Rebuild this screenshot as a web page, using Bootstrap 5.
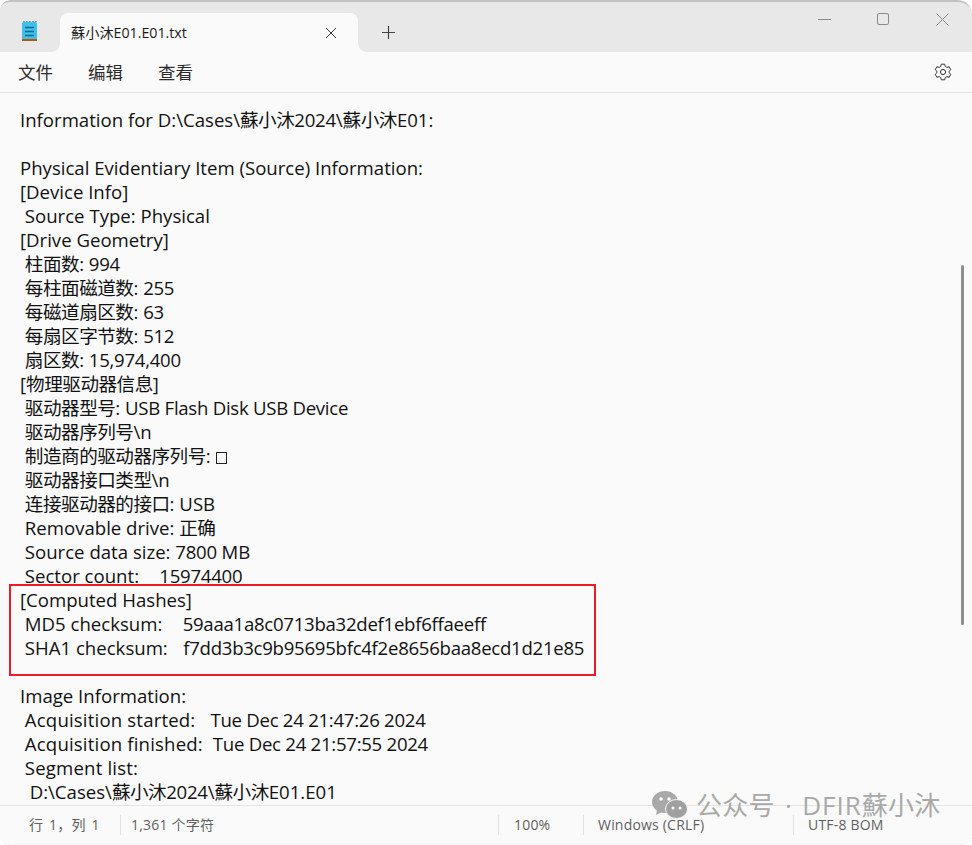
<!doctype html>
<html lang="zh-CN"><head><meta charset="utf-8"><title>Notepad</title>
<link href="https://cdn.jsdelivr.net/npm/bootstrap@5.3.0/dist/css/bootstrap.min.css" rel="stylesheet">
<style>
html,body{height:845px;overflow:hidden;background:#fff}
body{font-family:"Open Sans","Noto Sans CJK SC",sans-serif;color:#1b1b1b}
.win{height:845px;width:972px;background:#fafafa;border-radius:10px 14px 10px 10px;overflow:hidden;position:relative;box-shadow:inset 0 -1px 1px -1px #bbb}
.tabbar{height:52px;background:#e8e8e8;border-top:2px solid #c2c2c2;border-radius:10px 14px 0 0}
.appicon{width:60px;margin-top:10px}
.ftab{width:298px;height:39px;margin-top:11px;background:#fafafa;border-radius:8px 8px 0 0;padding:0 21px 0 11px;font-size:14.2px;position:relative}
.ftab::before,.ftab::after{content:"";position:absolute;bottom:0;width:8px;height:8px}
.ftab::before{left:-8px;background:radial-gradient(circle at 0 0,#e8e8e8 7.5px,#fafafa 8px)}
.ftab::after{right:-8px;background:radial-gradient(circle at 100% 0,#e8e8e8 7.5px,#fafafa 8px)}
.plus{width:60px;margin-top:11px}
.winbtns{margin-left:auto;margin-top:-16px}
.winbtn{width:59px}
.menubar{height:41px;border-bottom:1px solid #e5e5e5;padding-left:18px;font-size:17.5px;gap:35px;padding-right:20px;color:#2b2b2b}
.doc{height:712px;padding:15px 0 0 20px;overflow:hidden;font-size:18.6px;line-height:24px;white-space:pre;color:#111}
.doc div{height:24px}
.num{letter-spacing:-.27px}
.cjk{letter-spacing:-.5px}
.lbl{letter-spacing:.17px}
.hashv{letter-spacing:-.27px;margin-left:1px}
.tofu{display:inline-block;width:11px;height:12px;border:1px solid #222;vertical-align:-1px}
.statusbar{height:40px;border-top:1px solid #e5e5e5;font-size:14px;color:#5f5f5f;padding-top:9px;letter-spacing:.2px}
.scell{height:20px;line-height:20px;border-left:1px solid #e2e2e2;padding-left:14px}
.c1{width:120px;border-left:0;padding-left:29px;word-spacing:2px}.c2{width:378px;padding-left:10px}.c3{width:85px;padding-left:15px}.c4{width:210px}.c5{flex:1}
.redbox{position:absolute;left:9px;top:584px;width:587px;height:92px;border:2px solid #ed1c24}
.vbar{position:absolute;left:961px;top:265px;width:3px;height:360px;background:#8e8e8e;border-radius:2px}
.mark-w{position:absolute;left:652px;top:788px;font-size:26px;line-height:34px;color:#a9a9a9;gap:8px;letter-spacing:.3px;word-spacing:3px;white-space:pre}
.latin-w{letter-spacing:1px}
</style></head><body>
<div class="win">
 <div class="tabbar d-flex">
  <div class="appicon d-flex justify-content-center align-items-center">
   <svg width="18" height="22" viewBox="0 0 18 22"><rect x="1" y="1" width="15" height="18" rx="1.5" fill="#3fc0e8"/><rect x="1" y="18" width="15" height="2" fill="#b4580f"/><path d="M3 1V0M6 1V0M9 1V0M12 1V0M15 1V0" stroke="#15586f"/><path d="M4 6.500h9M4 10.500h9M4 14.500h9" stroke="#0f6a8e" stroke-width="1.500"/></svg>
  </div>
  <div class="ftab d-flex align-items-center justify-content-between">
   <span>蘇小沐E01.E01.txt</span>
   <svg width="12" height="12" viewBox="0 0 12 12"><path d="M1 1l10 10M11 1L1 11" stroke="#333" stroke-width="1"/></svg>
  </div>
  <div class="plus d-flex justify-content-center align-items-center">
   <svg width="13" height="13" viewBox="0 0 13 13"><path d="M6.500 0v13M0 6.500h13" stroke="#444" stroke-width="1.200"/></svg>
  </div>
  <div class="winbtns d-flex align-items-center">
   <div class="winbtn d-flex justify-content-center"><svg width="13" height="13" viewBox="0 0 13 13"><path d="M0 6.500h13" stroke="#8a8a8a"/></svg></div>
   <div class="winbtn d-flex justify-content-center"><svg width="13" height="13" viewBox="0 0 13 13"><rect x=".5" y=".5" width="11" height="11" rx="1.500" fill="none" stroke="#8a8a8a"/></svg></div>
   <div class="winbtn d-flex justify-content-center"><svg width="13" height="13" viewBox="0 0 13 13"><path d="M.5.500l12 12M12.500.500l-12 12" stroke="#8a8a8a"/></svg></div>
  </div>
 </div>
 <div class="menubar d-flex align-items-center">
  <span>文件</span><span>编辑</span><span>查看</span>
  <svg class="ms-auto" width="18" height="18" viewBox="0 0 18 18" fill="none" stroke="#333" stroke-width="1"><circle cx="9" cy="9" r="2.600"/><path d="M7.300 1.200h3.400l.6 2.300 1.500.9 2.300-.7 1.700 3-1.700 1.600v1.400l1.700 1.600-1.700 3-2.300-.7-1.500.9-.6 2.300H7.300l-.6-2.300-1.500-.9-2.300.7-1.700-3 1.700-1.600V8.300L1.200 6.700l1.700-3 2.300.7 1.500-.9z"/></svg>
 </div>
 <div class="doc"><div>Information for D:\Cases\<span class="cjk">蘇小沐</span><span class="num">2024</span>\<span class="cjk">蘇小沐</span>E01:</div><div></div><div>Physical Evidentiary Item (Source) Information:</div><div>[Device Info]</div><div> Source Type: Physical</div><div>[Drive Geometry]</div><div> <span class="cjk">柱面数</span>: <span class="num">994</span></div><div> <span class="cjk">每柱面磁道数</span>: <span class="num">255</span></div><div> <span class="cjk">每磁道扇区数</span>: <span class="num">63</span></div><div> <span class="cjk">每扇区字节数</span>: <span class="num">512</span></div><div> <span class="cjk">扇区数</span>: <span class="num">15,974,400</span></div><div>[<span class="cjk">物理驱动器信息</span>]</div><div> <span class="cjk">驱动器型号</span>: <span class="num">USB Flash Disk USB Device</span></div><div> <span class="cjk">驱动器序列号</span>\n</div><div> <span class="cjk">制造商的驱动器序列号</span>: <span class="tofu"></span></div><div> <span class="cjk">驱动器接口类型</span>\n</div><div> <span class="cjk">连接驱动器的接口</span>: USB</div><div> Removable drive: <span class="cjk">正确</span></div><div> Source data size: <span class="num">7800</span> MB</div><div> Sector count:    <span class="hashv">15974400</span></div><div>[Computed Hashes]</div><div> MD5 checksum:    <span class="hashv">59aaa1a8c0713ba32def1ebf6ffaeeff</span></div><div> SHA1 checksum:   <span class="hashv">f7dd3b3c9b95695bfc4f2e8656baa8ecd1d21e85</span></div><div></div><div>Image Information:</div><div> <span class="lbl">Acquisition started:   </span><span class="num">Tue Dec 24 21:47:26 2024</span></div><div> <span class="lbl">Acquisition finished:  </span><span class="num">Tue Dec 24 21:57:55 2024</span></div><div> <span class="lbl">Segment list:</span></div><div>  D:\Cases\<span class="cjk">蘇小沐</span><span class="num">2024</span>\<span class="cjk">蘇小沐</span>E01.E01</div></div>
 <div class="statusbar d-flex">
  <div class="scell c1">行 1，列 1</div><div class="scell c2">1,361 个字符</div><div class="scell c3">100%</div><div class="scell c4">Windows (CRLF)</div><div class="scell c5">UTF-8 BOM</div>
 </div>
 <div class="redbox"></div>
 <div class="vbar"></div>
 <div class="mark-w d-flex align-items-center">
  <svg width="36" height="28" viewBox="0 0 36 28"><ellipse cx="13" cy="11" rx="13" ry="11" fill="#a9a9a9"/><path d="M5 19l-1 5 6-3z" fill="#a9a9a9"/><ellipse cx="24.500" cy="18" rx="11" ry="9.500" fill="#a0a0a0" stroke="#fafafa"/><circle cx="9" cy="8" r="1.800" fill="#fafafa"/><circle cx="17" cy="8" r="1.800" fill="#fafafa"/><circle cx="21" cy="17" r="1.500" fill="#fafafa"/><circle cx="28" cy="17" r="1.500" fill="#fafafa"/></svg>
  <span>公众号 · <span class="latin-w">DFIR</span>蘇小沐</span>
 </div>
</div>
</body></html>
